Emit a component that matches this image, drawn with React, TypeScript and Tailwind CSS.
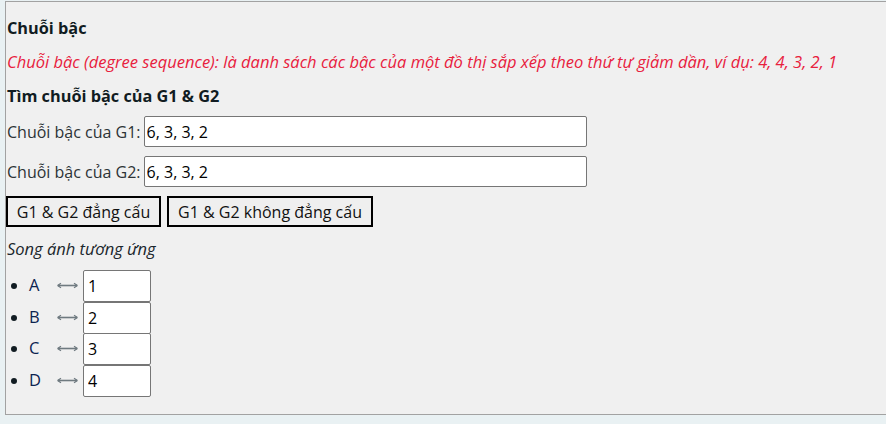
import React from "react";

const Arrow = () => (
  <svg width="21" height="7" viewBox="0 0 21 7" className="shrink-0">
    <line x1="1" y1="3.5" x2="20" y2="3.5" stroke="#6f7a80" strokeWidth="1.6" />
    <path d="M0.5 3.5 L4 1.2 M0.5 3.5 L4 5.8" stroke="#6f7a80" strokeWidth="1.2" fill="none" />
    <path d="M20.5 3.5 L17 1.2 M20.5 3.5 L17 5.8" stroke="#6f7a80" strokeWidth="1.2" fill="none" />
  </svg>
);

const items = [
  { k: "A", v: "1" },
  { k: "B", v: "2" },
  { k: "C", v: "3" },
  { k: "D", v: "4" },
];

export default function App() {
  return (
    <div
      className="min-h-screen bg-[#e9f1f3] pt-[1px] pl-[5px] text-[16px] text-[#1a262c]"
      style={{ fontFamily: '"Open Sans", "Noto Sans", sans-serif' }}
    >
      <div className="w-[900px] border border-[#a2a2a2] bg-[#f0f0f0] pb-[17px]">
        <div className="mt-[14px] h-[24px] pl-[1px] text-[16.3px] leading-[24px] font-bold text-[#111c22]">Chuỗi bậc</div>
        <div className="mt-[10px] h-[24px] pl-[1px] text-[16.5px] leading-[24px] italic text-[#e8203d]">
          Chuỗi bậc (degree sequence): là danh sách các bậc của một đồ thị sắp xếp theo thứ tự giảm dần, ví dụ: 4, 4, 3, 2, 1
        </div>
        <div className="mt-[10px] h-[24px] pl-[1px] text-[16.3px] leading-[24px] font-bold text-[#111c22]">Tìm chuỗi bậc của G1 &amp; G2</div>

        <div className="mt-[8px] flex h-[31px] items-center pl-[1px]">
          <span className="mr-[3px] text-[#2c3336]">Chuỗi bậc của G1:</span>
          <input
            readOnly
            value="6, 3, 3, 2"
            className="h-[31px] w-[443px] rounded-[2px] border border-[#767676] bg-white px-[2px] text-[16px] text-black outline-none"
          />
        </div>
        <div className="mt-[9px] flex h-[31px] items-center pl-[1px]">
          <span className="mr-[3px] text-[#2c3336]">Chuỗi bậc của G2:</span>
          <input
            readOnly
            value="6, 3, 3, 2"
            className="h-[31px] w-[443px] rounded-[2px] border border-[#767676] bg-white px-[2px] text-[16px] text-black outline-none"
          />
        </div>

        <div className="mt-[9px] flex gap-[6px]">
          <button className="h-[31px] w-[155px] border-2 border-black bg-[#efefef] text-[16px] text-[#111]">
            G1 &amp; G2 đẳng cấu
          </button>
          <button className="h-[31px] w-[206px] border-2 border-black bg-[#efefef] text-[16px] text-[#111]">
            G1 &amp; G2 không đẳng cấu
          </button>
        </div>

        <div className="mt-[10px] h-[24px] pl-[1px] text-[16.5px] leading-[24px] italic text-[#1a262c]">Song ánh tương ứng</div>

        <ul className="mt-[9px]">
          {items.map((it) => (
            <li key={it.k} className="flex h-[31.67px] items-start">
              <span className="mt-[13px] ml-[5px] h-[6px] w-[6px] rounded-full bg-[#111c22]" />
              <span className="ml-[12px] mt-[3px] w-[28px] text-[16.5px] text-[#0c2350]">{it.k}</span>
              <span className="mt-[12px]">
                <Arrow />
              </span>
              <input
                readOnly
                value={it.v}
                className="ml-[5px] h-[32px] w-[68px] rounded-[2px] border border-[#767676] bg-white px-[4px] text-[16px] text-black outline-none"
              />
            </li>
          ))}
        </ul>
      </div>
    </div>
  );
}
